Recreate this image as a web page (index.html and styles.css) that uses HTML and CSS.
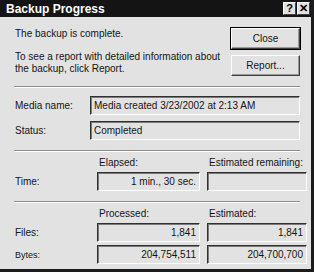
FILE: index.html
```html
<!DOCTYPE html>
<html lang="en">
<head>
  <meta charset="UTF-8">
  <title>Backup Progress</title>
  <link rel="stylesheet" href="styles.css">
</head>
<body>
  <div class="window">
    <div class="titlebar">
      <span class="title">Backup Progress</span>
      <span class="tb-btn">?</span>
      <span class="tb-btn">✕</span>
    </div>

    <div class="content">
      <div class="top">
        <div class="msg">
          <p class="line">The backup is complete.</p>
          <p class="line gap">To see a report with detailed information about<br>the backup, click Report.</p>
        </div>
        <div class="buttons">
          <button type="button" class="btn default">Close</button>
          <button type="button" class="btn">Report...</button>
        </div>
      </div>

      <div class="sep"></div>

      <div class="info">
        <span class="label">Media name:</span>
        <div class="field">Media created 3/23/2002 at 2:13 AM</div>
        <span class="label">Status:</span>
        <div class="field">Completed</div>
      </div>

      <div class="sep"></div>

      <div class="stats">
        <span></span>
        <span class="head">Elapsed:</span>
        <span class="head">Estimated remaining:</span>
        <span class="label">Time:</span>
        <div class="field num">1 min., 30 sec.</div>
        <div class="field num"></div>
      </div>

      <div class="sep"></div>

      <div class="stats">
        <span></span>
        <span class="head">Processed:</span>
        <span class="head">Estimated:</span>
        <span class="label">Files:</span>
        <div class="field num">1,841</div>
        <div class="field num">1,841</div>
        <span class="label small">Bytes:</span>
        <div class="field num">204,754,511</div>
        <div class="field num">204,700,700</div>
      </div>
    </div>
  </div>
</body>
</html>
```

FILE: styles.css
```css
body {
  margin: 0;
  background: #e2e2e2;
  font-family: "Liberation Sans", Arial, sans-serif;
  font-size: 10px;
  color: #141414;
}

.window {
  width: 314px;
  height: 272px;
  box-sizing: border-box;
  background: #e2e2e2;
  border-right: 3px solid #1c1c1c;
  border-bottom: 3px solid #1c1c1c;
}

.titlebar {
  height: 17px;
  background: #141414;
  color: #ffffff;
  display: flex;
  align-items: center;
  padding: 0 1px 0 6px;
  font-weight: bold;
  font-size: 12px;
}

.title {
  flex: 1;
}

.tb-btn {
  width: 11px;
  height: 11px;
  margin-left: 1px;
  background: #e2e2e2;
  border: 1px solid;
  border-color: #ffffff #404040 #404040 #ffffff;
  color: #000000;
  font-size: 11px;
  line-height: 11px;
  text-align: center;
}

.content {
  padding: 11px 11px 0 15px;
}

.top {
  display: flex;
  justify-content: space-between;
}

.line {
  margin: 0;
  line-height: 12px;
}

.gap {
  margin-top: 11px;
}

.buttons {
  display: flex;
  flex-direction: column;
  gap: 6px;
}

.btn {
  width: 69px;
  height: 21px;
  margin: 0;
  padding: 0;
  background: #e2e2e2;
  border: 1px solid;
  border-color: #ffffff #404040 #404040 #ffffff;
  box-shadow: inset -1px -1px 0 #9a9a9a;
  font-family: inherit;
  font-size: 10px;
  color: #141414;
}

.btn.default {
  outline: 1px solid #000000;
}

.sep {
  height: 0;
  border-top: 1px solid #8c8c8c;
  border-bottom: 1px solid #ffffff;
  margin: 10px 0 0 -1px;
}

.info {
  display: grid;
  grid-template-columns: 75px 1fr;
  row-gap: 6px;
  align-items: center;
  margin-top: 8px;
}

.stats {
  display: grid;
  grid-template-columns: 75px 103px 100px;
  column-gap: 7px;
  row-gap: 3px;
  align-items: center;
  margin-top: 5px;
}

.head {
  padding-left: 2px;
  line-height: 12px;
}

.field {
  height: 19px;
  box-sizing: border-box;
  border: 1px solid;
  border-color: #303030 #ffffff #ffffff #303030;
  box-shadow: inset 1px 1px 0 #7a7a7a;
  padding: 0 3px;
  line-height: 17px;
  white-space: nowrap;
  overflow: hidden;
}

.num {
  text-align: right;
}

.small {
  font-size: 9px;
}
```
